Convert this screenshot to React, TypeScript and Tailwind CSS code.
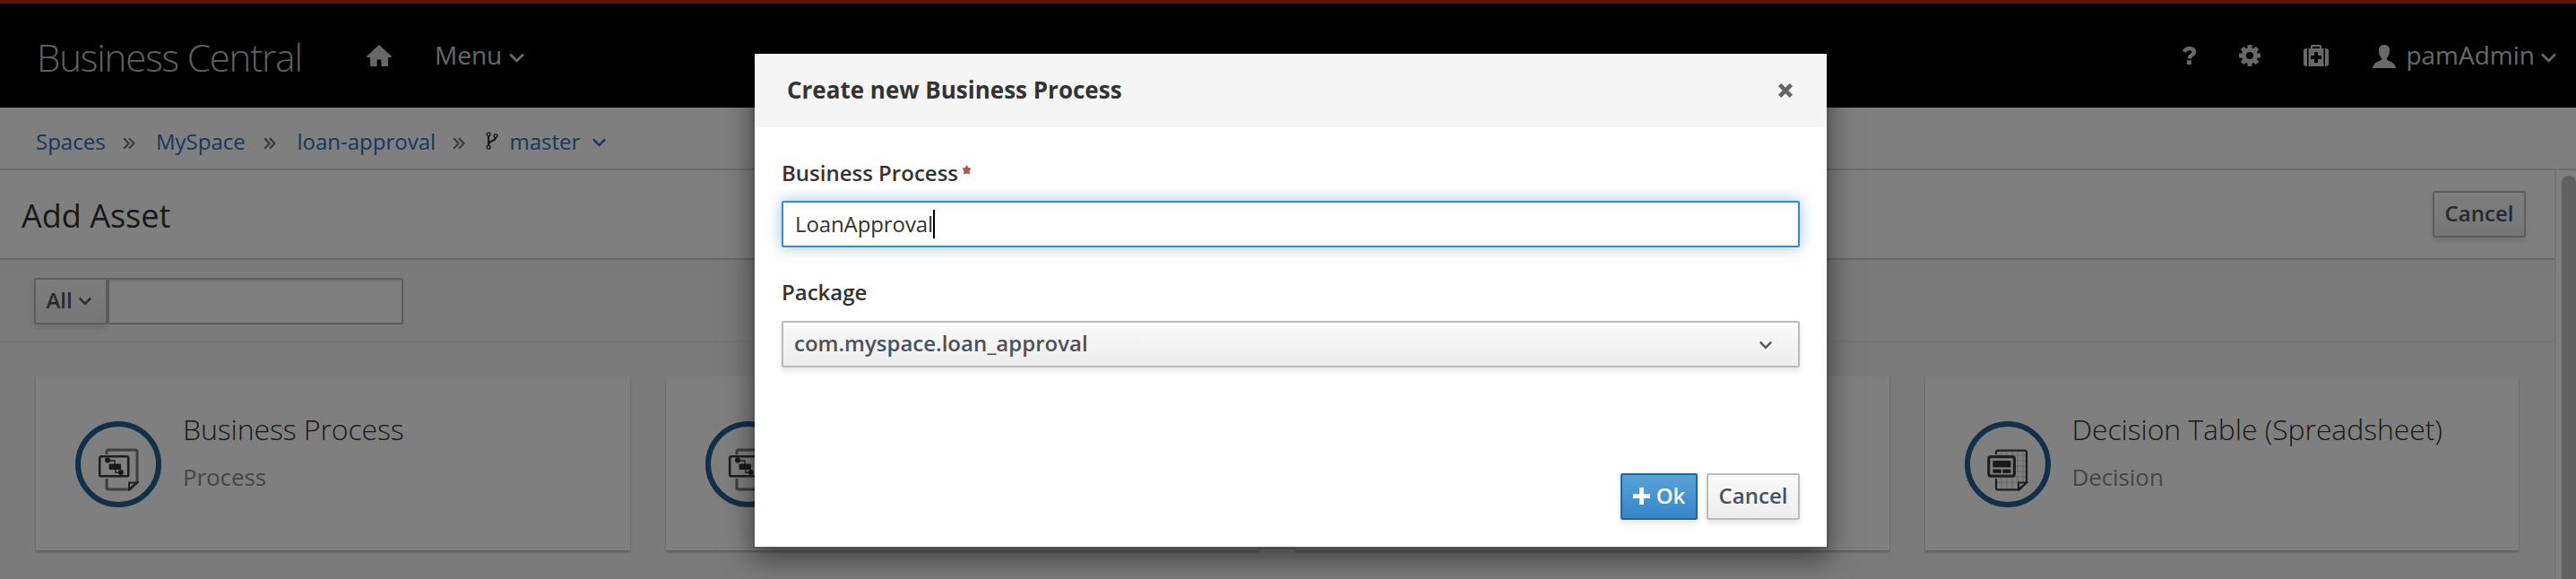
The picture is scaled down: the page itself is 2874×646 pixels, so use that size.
import React from "react";

const Chevron = ({ className }: { className: string }) => (
  <svg viewBox="0 0 16 10" className={className} fill="none" stroke="currentColor" strokeWidth="2.6">
    <path d="M1 1.2 L8 8.2 L15 1.2" />
  </svg>
);

const HomeIcon = () => (
  <svg viewBox="0 0 28 24" className="w-7 h-6" fill="currentColor">
    <path d="M14 0 L27.6 12.4 Q28.4 14 27 14 H24 V23 Q24 24 23 24 H16.4 V16.4 H11.6 V24 H5 Q4 24 4 23 V14 H1 Q-0.4 14 0.4 12.4 Z" />
  </svg>
);

const HelpIcon = () => (
  <svg viewBox="0 0 16 20" className="w-4 h-5" fill="none" stroke="currentColor">
    <path d="M1.8 5.8 Q3.8 2.1 7.8 2.1 Q12.8 2.1 12.8 6 Q12.8 8 10.4 9.4 Q8 10.8 7.6 13.4" strokeWidth="4.4" />
    <path d="M7.4 15.2 v4.8" strokeWidth="5" />
  </svg>
);

const GearIcon = () => (
  <svg viewBox="0 0 24 24" className="size-6">
    <g fill="currentColor">
      {[0, 45, 90, 135].map((a) => (
        <rect key={a} x="9.5" y="0" width="5" height="24" rx="1" transform={`rotate(${a} 12 12)`} />
      ))}
      <circle cx="12" cy="12" r="9" />
    </g>
    <circle cx="12" cy="12" r="4" fill="#000" />
  </svg>
);

const MedkitIcon = () => (
  <svg viewBox="0 0 28 24" className="w-7 h-6" fill="currentColor">
    <path d="M4 4 V24 H3 Q0 24 0 21 V7 Q0 4 3 4 Z M24 4 V24 H25 Q28 24 28 21 V7 Q28 4 25 4 Z" />
    <path
      fillRule="evenodd"
      d="M5.6 4 H8 V1.6 Q8 0 9.6 0 H18.4 Q20 0 20 1.6 V4 H22.4 V24 H5.6 Z M10 2 V4 H18 V2 Z M12 8 V12 H8 V16 H12 V20 H16 V16 H20 V12 H16 V8 Z"
    />
  </svg>
);

const UserIcon = () => (
  <svg viewBox="0 0 26 26" className="size-[26px]" fill="currentColor">
    <path d="M13 0 C17 0 19 2.4 19 6 C19 10 18 13 16 14.6 V16.6 C19 18.6 25 19.6 26 26 H0 C1 19.6 7 18.6 10 16.6 V14.6 C8 13 7 10 7 6 C7 2.4 9 0 13 0 Z" />
  </svg>
);

const BranchIcon = () => (
  <svg viewBox="0 0 14 20" className="w-[14px] h-5" fill="none" stroke="currentColor" strokeWidth="1.4">
    <circle cx="3" cy="2.8" r="1.9" />
    <circle cx="11" cy="4.6" r="1.9" />
    <circle cx="3" cy="17.2" r="1.9" />
    <path d="M3 5 V15" strokeWidth="2.2" />
    <path d="M11 6.6 C11 11 3.4 9.6 3 14" strokeWidth="2.2" />
  </svg>
);

const ProcessIcon = () => (
  <svg viewBox="0 0 46 48" className="w-[46px] h-12" fill="none" stroke="#3c3c3c" strokeWidth="2">
    <path d="M10 7 V4 Q10 2 12 2 H42 Q44 2 44 4 V38 L36 46 H12 Q10 46 10 44 V34" stroke="#7c7c7c" strokeWidth="3" />
    <path d="M35 46 V38.5 H44 Z" />
    <rect x="2.2" y="9.2" width="32" height="22" rx="1.5" strokeWidth="2.6" />
    <path d="M11 14 H19 V18 M20 23 V27.4 H26" strokeWidth="1.4" />
    <circle cx="11" cy="13.6" r="3" fill="#333" stroke="none" />
    <rect x="12.6" y="17.4" width="13.4" height="6.6" rx="1" fill="#333" stroke="none" />
    <circle cx="25.8" cy="27" r="3" fill="#333" stroke="none" />
  </svg>
);

const TableIcon = () => (
  <svg viewBox="0 0 46 48" className="w-[46px] h-12" fill="none" stroke="#3c3c3c" strokeWidth="2.2">
    <path d="M16 4 V46 M22 4 V46 M28 4 V46 M34 4 V40 M40 4 V38 M11 8 H43 M11 14 H43 M11 20 H43 M11 26 H43 M11 32 H43 M11 38 H36" stroke="#ccc" strokeWidth="1" />
    <path d="M10 7 V5 Q10 2.6 12 2.6 H42 Q44 2.6 44 5 V38 L36 46.4 H12 Q10 46.4 10 44 V34" />
    <path d="M35 46 V38.5 H44 Z" fill="#fff" />
    <rect x="1.8" y="9.6" width="28.6" height="21.6" rx="2.4" strokeWidth="3.2" fill="#fff" />
    <rect x="6.4" y="14" width="20" height="7.4" fill="#333" stroke="none" />
    <rect x="6.4" y="23.6" width="9.4" height="4.2" fill="#333" stroke="none" />
    <rect x="17.4" y="23.6" width="9" height="4.2" fill="#333" stroke="none" />
  </svg>
);

const Separator = () => (
  <svg
    viewBox="0 0 14 14"
    className="mt-3 h-[14px] w-[14px] shrink-0"
    fill="none"
    stroke="#72767b"
    strokeWidth="2.2"
  >
    <path d="M1.2 1.2 L6.6 7 L1.2 12.8 M7 1.2 L12.4 7 L7 12.8" />
  </svg>
);

const btn =
  "flex items-center justify-center h-[52px] pb-[2px] border-2 border-[#bbb] rounded-[2px] bg-linear-to-b from-[#fafafa] to-[#ededed] text-[#4d5258] font-semibold shadow-[0_4px_6px_rgba(3,3,3,0.1)]";

function AssetCard({ title, type, icon }: { title: string; type: string; icon: React.ReactNode }) {
  return (
    <div className="flex flex-1 h-[194px] bg-white shadow-[0_2px_2px_rgba(3,3,3,0.25)] pl-11 pt-[50px]">
      <div className="flex size-24 shrink-0 justify-center rounded-full border-[6px] border-[#246092] pt-6">{icon}</div>
      <div className="ml-6 -mt-[13px] whitespace-nowrap">
        <div className="text-[32px] leading-[44px] font-light tracking-[-0.1px] text-[#333]">{title}</div>
        <div className="mt-[13px] text-[26px] leading-[36px] tracking-[-0.1px] text-[#8b8d8f]">{type}</div>
      </div>
    </div>
  );
}

function NavBar() {
  return (
    <header className="flex h-[120px] items-start border-t-4 border-[#be2818] bg-black text-[#d1d1d1]">
      <div className="ml-[41px] mt-[31px] w-[298px] text-[42px] leading-[58px] font-light tracking-[-1.15px] whitespace-nowrap text-[#c0c0c0]">
        Business Central
      </div>
      <div className="ml-[70px] mt-[46px]">
        <HomeIcon />
      </div>
      <div className="ml-12 mt-[38px] flex text-[28px] leading-[38px]">
        Menu
        <Chevron className="ml-[8px] mt-[17px] h-[11px] w-[17px]" />
      </div>
      <div className="ml-auto mr-[22px] flex items-start">
        <div className="mt-12"><HelpIcon /></div>
        <div className="ml-[47px] mt-[46px]"><GearIcon /></div>
        <div className="ml-12 mt-[46px]"><MedkitIcon /></div>
        <div className="ml-[49px] mt-[46px]"><UserIcon /></div>
        <div className="ml-[11.5px] mt-[38px] flex text-[28px] leading-[38px]">
          pamAdmin
          <Chevron className="ml-[7px] mt-[17px] h-[11px] w-[17px]" />
        </div>
      </div>
    </header>
  );
}

function Breadcrumbs() {
  return (
    <nav className="flex h-[70px] items-start border-b-2 border-[#d8d8d8] pl-10 pt-[21px] leading-[34px] text-[#3070ae]">
      <span className="w-[97px]">Spaces</span>
      <Separator />
      <span className="ml-[23px] w-[120px]">MySpace</span>
      <Separator />
      <span className="ml-[23.5px] w-[173.5px]">loan-approval</span>
      <Separator />
      <span className="ml-[23px] mt-[6px] text-[#333]"><BranchIcon /></span>
      <span className="ml-[12.5px]">master</span>
      <Chevron className="ml-[14px] mt-[13px] h-[10px] w-[15px]" />
    </nav>
  );
}

function CreateDialog() {
  return (
    <div className="absolute left-[840px] top-[58px] h-[554px] w-[1200px] border-2 border-black/20 bg-white bg-clip-padding shadow-[0_10px_30px_rgba(0,0,0,0.5)]">
      <div className="flex h-[82px] items-center justify-between bg-[#f5f5f5] pl-9 pr-[38px]">
        <h2 className="pb-[2px] text-[26px] font-bold text-[#333]">Create new Business Process</h2>
        <svg viewBox="0 0 16 16" className="size-4" stroke="#636363" strokeWidth="4.6">
          <path d="M1.6 1.6 L14.4 14.4 M14.4 1.6 L1.6 14.4" />
        </svg>
      </div>
      <div className="px-[30px] pt-[34px] text-[#333]">
        <label className="flex h-12 font-semibold leading-[34px]">
          Business Process
          <svg viewBox="0 0 10 11" className="ml-1 mt-2 h-[11px] w-[11px]" fill="#b8524c">
            <path d="M5 0 L6.8 3 L10 3.8 L8 6.8 L8.4 10.6 L5 9.4 L1.6 10.6 L2 6.8 L0 3.8 L3.2 3 Z" />
          </svg>
        </label>
        <div className="flex h-[52px] items-center rounded-[2px] border-2 border-[#3889cf] bg-white pl-[13px] shadow-[inset_0_2px_2px_rgba(3,3,3,0.075),0_0_16px_rgba(57,140,207,0.5)]">
          <span className="tracking-[-0.1px]">LoanApproval</span>
          <span className="h-8 w-[2px] bg-black" />
        </div>
        <label className="mt-[33px] flex h-[49px] font-semibold leading-[34px]">Package</label>
        <div className="flex h-[52px] items-center justify-between rounded-[2px] border-2 border-[#bbb] bg-linear-to-b from-[#fafafa] to-[#ededed] pl-3 pr-[29px] pb-[3px] font-semibold text-[#4d5258] shadow-[0_4px_6px_rgba(3,3,3,0.1)]">
          com.myspace.loan_approval
          <Chevron className="mt-[5px] h-[10px] w-[14px]" />
        </div>
        <div className="mt-[118px] flex justify-end gap-[10px]">
          <button className="flex h-[52px] w-[86px] items-center justify-center gap-[7px] rounded-[2px] border-2 border-[#23659f] bg-linear-to-b from-[#58a3d8] to-[#3785c8] pb-[2px] font-semibold text-white shadow-[0_4px_6px_rgba(3,3,3,0.1)]">
            <svg viewBox="0 0 20 20" className="size-[19px]" stroke="currentColor" strokeWidth="5">
              <path d="M10 0 V20 M0 10 H20" />
            </svg>
            Ok
          </button>
          <button className={btn + " w-[104px]"}>Cancel</button>
        </div>
      </div>
    </div>
  );
}

export default function App() {
  return (
    <div className="relative h-[646px] w-[2874px] overflow-hidden bg-white font-['Open_Sans',sans-serif] text-[24px]">
      <NavBar />
      <Breadcrumbs />
      <div className="flex h-[456px]">
        <main className="w-[2852px] border-r-2 border-[#e8e8e8] bg-[#f5f5f5]">
          <div className="flex h-[100px] items-center justify-between border-b-2 border-[#d0d0d0] bg-white pl-6 pr-8">
            <h1 className="pt-1 text-[36px] text-[#333]">Add Asset</h1>
            <button className={btn + " w-[104px]"}>Cancel</button>
          </div>
          <div className="flex h-[92px] border-b-2 border-[#ebebeb] pl-[38px] pt-5">
            <button className={btn + " w-[82px] gap-[7px] pr-[5px]"}>
              All
              <Chevron className="mt-[2px] h-[10px] w-[14px]" />
            </button>
            <div className="h-[52px] w-[330px] rounded-[2px] border-2 border-[#bbb] bg-white shadow-[inset_0_2px_2px_rgba(3,3,3,0.075)]" />
          </div>
          <div className="flex gap-10 px-10 pt-[38px]">
            <AssetCard title="Business Process" type="Process" icon={<ProcessIcon />} />
            <AssetCard title="" type="" icon={<ProcessIcon />} />
            <AssetCard title="" type="" icon={<TableIcon />} />
            <AssetCard title="Decision Table (Spreadsheet)" type="Decision" icon={<TableIcon />} />
          </div>
        </main>
        <div className="flex-1 pl-[6px] pt-[6px]">
          <div className="h-[450px] w-4 rounded-t-full bg-[#c1c1c1]" />
        </div>
      </div>
      <div className="absolute inset-0 bg-black/50" />
      <CreateDialog />
    </div>
  );
}
